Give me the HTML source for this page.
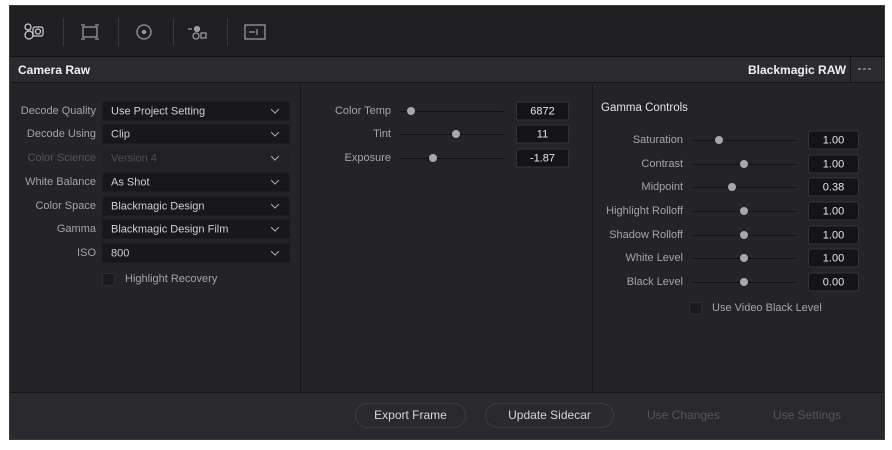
<!DOCTYPE html>
<html><head><meta charset="utf-8"><style>
*{margin:0;padding:0;box-sizing:border-box}
body{width:892px;height:450px;background:#fff;font-family:"Liberation Sans",sans-serif;position:relative;overflow:hidden}
.a{position:absolute}
#p{position:absolute;left:9px;top:5px;width:876px;height:435px;background:#242428;border:1px solid #3a3a3e}
.lbl{position:absolute;font-size:11px;color:#a4a4a8;text-align:right;white-space:nowrap;transform:translateY(-50%)}
.dd{position:absolute;height:19px;background:#18181b;border-radius:2px;font-size:11px;color:#d0d0d4;padding-left:9px;line-height:20px;transform:translateY(-50%)}
.dd:after{content:"";position:absolute;right:12px;top:5px;width:5px;height:5px;border-right:1.3px solid #aaa;border-bottom:1.3px solid #aaa;transform:rotate(45deg)}
.sl{position:absolute;height:1px;background:#111}
.th{position:absolute;width:8px;height:8px;border-radius:50%;background:#a8a8ac;transform:translate(-50%,-50%)}
.vb{position:absolute;height:19px;background:#141416;border:1px solid #333;border-radius:2px;color:#e8e8ea;font-size:11px;text-align:center;line-height:18px;transform:translateY(-50%)}
.cb{position:absolute;width:13px;height:13px;background:#1b1b1e;border:1px solid #2e2e32;border-radius:2px}
.btn{position:absolute;top:403px;height:25px;border:1px solid #3c3c40;border-radius:13px;color:#d6d6d8;font-size:12px;text-align:center;line-height:23px;background:#2a2a2e}
</style></head><body>
<div id="p"></div>
<div class="a" style="left:10px;top:6px;width:874px;height:50px;background:#1f1f22"></div>
<div class="a" style="left:10px;top:56px;width:874px;height:1px;background:#111"></div>
<div class="a" style="left:10px;top:57px;width:874px;height:26px;background:#2b2b2f;border-bottom:1px solid #161618"></div>
<div class="a" style="left:18px;top:63px;font-size:12px;font-weight:bold;color:#f0f0f0">Camera Raw</div>
<div class="a" style="left:748px;top:63px;font-size:12px;font-weight:bold;color:#f0f0f0">Blackmagic RAW</div>
<div class="a" style="left:850px;top:57px;width:1px;height:26px;background:#161618"></div>
<div class="a" style="left:858px;top:68px;width:3px;height:2px;background:#777;box-shadow:5px 0 #777,10px 0 #777"></div>
<div class="a" style="left:63px;top:18px;width:1px;height:28px;background:#3a3a3e"></div>
<div class="a" style="left:118px;top:18px;width:1px;height:28px;background:#3a3a3e"></div>
<div class="a" style="left:173px;top:18px;width:1px;height:28px;background:#3a3a3e"></div>
<div class="a" style="left:227px;top:18px;width:1px;height:28px;background:#3a3a3e"></div>
<svg class="a" style="left:20px;top:20px" width="250" height="24" fill="none" stroke="#c8c8cc" stroke-width="1.3">
<circle cx="9" cy="15" r="4"/><circle cx="8" cy="7" r="3"/><rect x="13" y="7" width="10" height="9" rx="2"/><circle cx="18" cy="11.5" r="2.5"/>
<g stroke="#9a9a9e"><rect x="63" y="7" width="14" height="10"/><path d="M61 5h4M75 5h4M61 19h4M75 19h4"/></g>
<g stroke="#9a9a9e"><circle cx="124" cy="12" r="7"/><circle cx="124" cy="12" r="1.5" fill="#9a9a9e"/></g>
<g stroke="#9a9a9e"><circle cx="177" cy="9" r="2.5" fill="#9a9a9e"/><circle cx="176" cy="16" r="3"/><rect x="181" y="13" width="5" height="5"/><path d="M168 9h4"/></g>
<g stroke="#9a9a9e"><rect x="225" y="5" width="20" height="14"/><path d="M229 12h6M237 9v6"/></g>
</svg>
<div class="a" style="left:300px;top:84px;width:1px;height:308px;background:#161618"></div>
<div class="a" style="left:592px;top:84px;width:1px;height:308px;background:#161618"></div>
<div class="a" style="left:10px;top:392px;width:874px;height:47px;background:#2a2a2e;border-top:1px solid #161618"></div>
<div class="btn" style="left:355px;width:111px">Export Frame</div>
<div class="btn" style="left:485px;width:129px">Update Sidecar</div>
<div class="a" style="left:647px;top:408px;font-size:12px;color:#55555a">Use Changes</div>
<div class="a" style="left:773px;top:408px;font-size:12px;color:#55555a">Use Settings</div>
<div class="lbl" style="right:796px;top:111px">Decode Quality</div><div class="dd" style="left:102px;width:188px;top:111px">Use Project Setting</div>
<div class="lbl" style="right:796px;top:134px">Decode Using</div><div class="dd" style="left:102px;width:188px;top:134px">Clip</div>
<div class="lbl" style="right:796px;top:158px;color:#555558">Color Science</div><div class="dd" style="left:102px;width:188px;top:158px;background:#212124;color:#4e4e52">Version 4</div>
<div class="lbl" style="right:796px;top:182px">White Balance</div><div class="dd" style="left:102px;width:188px;top:182px">As Shot</div>
<div class="lbl" style="right:796px;top:206px">Color Space</div><div class="dd" style="left:102px;width:188px;top:206px">Blackmagic Design</div>
<div class="lbl" style="right:796px;top:229px">Gamma</div><div class="dd" style="left:102px;width:188px;top:229px">Blackmagic Design Film</div>
<div class="lbl" style="right:796px;top:253px">ISO</div><div class="dd" style="left:102px;width:188px;top:253px">800</div>
<div class="cb" style="left:102px;top:273px"></div><div class="lbl" style="left:125px;top:279px;text-align:left">Highlight Recovery</div>
<div class="lbl" style="right:501px;top:111px">Color Temp</div><div class="sl" style="left:400px;width:103px;top:111px"></div><div class="th" style="left:411px;top:111px"></div><div class="vb" style="left:516px;width:53px;top:111px">6872</div>
<div class="lbl" style="right:501px;top:134px">Tint</div><div class="sl" style="left:400px;width:103px;top:134px"></div><div class="th" style="left:456px;top:134px"></div><div class="vb" style="left:516px;width:53px;top:134px">11</div>
<div class="lbl" style="right:501px;top:158px">Exposure</div><div class="sl" style="left:400px;width:103px;top:158px"></div><div class="th" style="left:433px;top:158px"></div><div class="vb" style="left:516px;width:53px;top:158px">-1.87</div>
<div class="a" style="left:601px;top:102px;font-size:11.5px;color:#e2e2e4">Gamma Controls</div>
<div class="lbl" style="right:209px;top:140px">Saturation</div><div class="sl" style="left:693px;width:103px;top:140px"></div><div class="th" style="left:719px;top:140px"></div><div class="vb" style="left:808px;width:51px;top:140px">1.00</div>
<div class="lbl" style="right:209px;top:164px">Contrast</div><div class="sl" style="left:693px;width:103px;top:164px"></div><div class="th" style="left:744px;top:164px"></div><div class="vb" style="left:808px;width:51px;top:164px">1.00</div>
<div class="lbl" style="right:209px;top:187px">Midpoint</div><div class="sl" style="left:693px;width:103px;top:187px"></div><div class="th" style="left:732px;top:187px"></div><div class="vb" style="left:808px;width:51px;top:187px">0.38</div>
<div class="lbl" style="right:209px;top:211px">Highlight Rolloff</div><div class="sl" style="left:693px;width:103px;top:211px"></div><div class="th" style="left:744px;top:211px"></div><div class="vb" style="left:808px;width:51px;top:211px">1.00</div>
<div class="lbl" style="right:209px;top:235px">Shadow Rolloff</div><div class="sl" style="left:693px;width:103px;top:235px"></div><div class="th" style="left:744px;top:235px"></div><div class="vb" style="left:808px;width:51px;top:235px">1.00</div>
<div class="lbl" style="right:209px;top:258px">White Level</div><div class="sl" style="left:693px;width:103px;top:258px"></div><div class="th" style="left:744px;top:258px"></div><div class="vb" style="left:808px;width:51px;top:258px">1.00</div>
<div class="lbl" style="right:209px;top:282px">Black Level</div><div class="sl" style="left:693px;width:103px;top:282px"></div><div class="th" style="left:744px;top:282px"></div><div class="vb" style="left:808px;width:51px;top:282px">0.00</div>
<div class="cb" style="left:689px;top:302px"></div><div class="lbl" style="left:712px;top:308px;text-align:left">Use Video Black Level</div>
</body></html>
